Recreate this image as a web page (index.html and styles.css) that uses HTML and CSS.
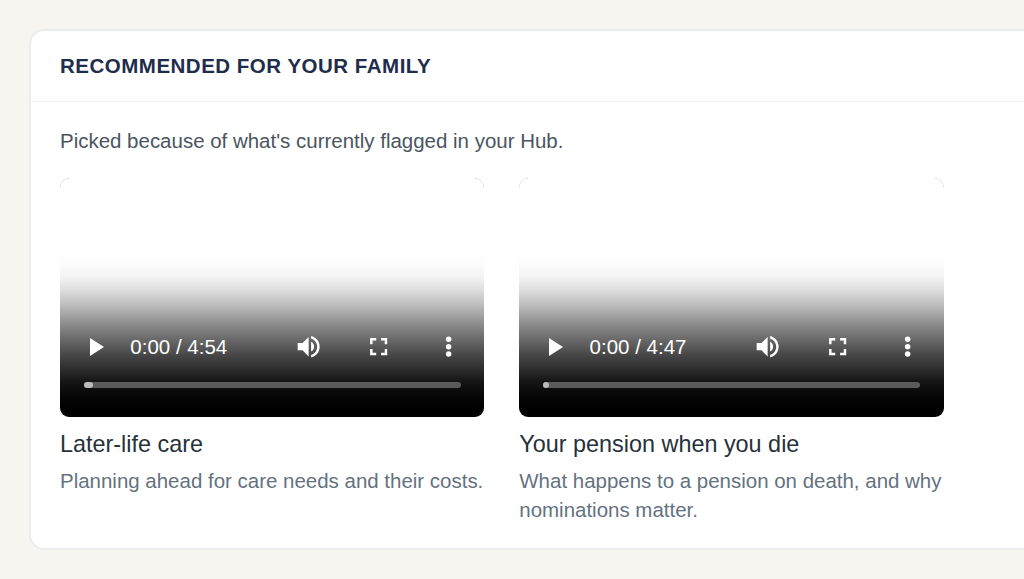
FILE: index.html
```html
<!DOCTYPE html>
<html lang="en">
<head>
    <meta charset="UTF-8">
    <meta name="viewport" content="width=device-width, initial-scale=1.0">
    <title>Recommended for your family</title>
    <link rel="stylesheet" href="styles.css">
</head>
<body>

    <section class="card">
        <div class="card-header">
            <h2>Recommended for your family</h2>
        </div>
        <div class="card-body">
            <p class="intro">Picked because of what's currently flagged in your Hub.</p>

            <div class="video-grid">
                <article class="video-item">
                    <div class="player">
                        <div class="controls">
                            <svg class="play" viewBox="0 0 14 18"><path d="M0 0v18l14-9z"/></svg>
                            <span class="time">0:00 / 4:54</span>
                            <svg class="icon" viewBox="0 0 24 24"><path d="M3 9v6h4l5 5V4L7 9H3zm13.500 3c0-1.770-1.020-3.290-2.500-4.030v8.050c1.480-.73 2.500-2.250 2.500-4.020zM14 3.230v2.060c2.890.86 5 3.540 5 6.710s-2.110 5.850-5 6.710v2.060c4.010-.91 7-4.490 7-8.770s-2.990-7.860-7-8.770z"/></svg>
                            <svg class="icon" viewBox="0 0 24 24"><path d="M7 14H5v5h5v-2H7v-3zm-2-4h2V7h3V5H5v5zm12 7h-3v2h5v-5h-2v3zM14 5v2h3v3h2V5h-5z"/></svg>
                            <svg class="icon" viewBox="0 0 24 24"><circle cx="12" cy="6" r="2.250"/><circle cx="12" cy="12" r="2.250"/><circle cx="12" cy="18" r="2.250"/></svg>
                        </div>
                        <div class="timeline"><div class="buffered" style="width: 9px"></div></div>
                    </div>
                    <h3>Later-life care</h3>
                    <p class="desc">Planning ahead for care needs and their costs.</p>
                </article>

                <article class="video-item">
                    <div class="player">
                        <div class="controls">
                            <svg class="play" viewBox="0 0 14 18"><path d="M0 0v18l14-9z"/></svg>
                            <span class="time">0:00 / 4:47</span>
                            <svg class="icon" viewBox="0 0 24 24"><path d="M3 9v6h4l5 5V4L7 9H3zm13.500 3c0-1.770-1.020-3.290-2.500-4.030v8.050c1.480-.73 2.500-2.250 2.500-4.020zM14 3.230v2.060c2.890.86 5 3.540 5 6.710s-2.110 5.850-5 6.710v2.060c4.010-.91 7-4.490 7-8.770s-2.990-7.860-7-8.770z"/></svg>
                            <svg class="icon" viewBox="0 0 24 24"><path d="M7 14H5v5h5v-2H7v-3zm-2-4h2V7h3V5H5v5zm12 7h-3v2h5v-5h-2v3zM14 5v2h3v3h2V5h-5z"/></svg>
                            <svg class="icon" viewBox="0 0 24 24"><circle cx="12" cy="6" r="2.250"/><circle cx="12" cy="12" r="2.250"/><circle cx="12" cy="18" r="2.250"/></svg>
                        </div>
                        <div class="timeline"><div class="buffered" style="width: 6px"></div></div>
                    </div>
                    <h3>Your pension when you die</h3>
                    <p class="desc">What happens to a pension on death, and why nominations matter.</p>
                </article>
            </div>
        </div>
    </section>

</body>
</html>
```
FILE: styles.css
```css
* {
    box-sizing: border-box;
}
body {
    margin: 0;
    padding: 29px 0 0 29px;
    background-color: #f7f5f0;
    font-family: "Liberation Sans", Arial, sans-serif;
}
h2, h3, p {
    margin: 0;
}
.card {
    height: 521px;
    border: 2px solid #ebedec;
    border-right: 0;
    border-radius: 15px 0 0 15px;
    background-color: white;
}
.card-header {
    height: 71px;
    padding: 20px 29px 0;
    border-bottom: 1px solid #eff1f2;
}
.card-header h2 {
    font-size: 20.500px;
    line-height: 29px;
    letter-spacing: 0.500px;
    text-transform: uppercase;
    color: #1e2d4c;
}
.card-body {
    padding: 24px 29px;
}
.intro {
    font-size: 20.480px;
    line-height: 29px;
    color: #4a5560;
}
.video-grid {
    display: grid;
    grid-template-columns: 424.300px 424.300px;
    gap: 35px;
    margin-top: 23px;
}
.player {
    display: flex;
    flex-direction: column;
    justify-content: flex-end;
    height: 238.500px;
    padding: 0 23.500px 29px;
    border-radius: 9px;
    background: linear-gradient(to bottom, #fff 75px, #fcfcfc 86px, #f4f4f4 98px, #dedede 112px, #b8b8b8 129px, #8f8f8f 145px, #686868 162px, #434343 179px, #262626 195px, #161616 203px, #0b0b0b 213px, #020202 225px, #000 235px) no-repeat;
    position: relative;
}
/* faint corner lines of the empty poster */
.player::before {
    content: "";
    position: absolute;
    inset: 0 0 auto 0;
    height: 9px;
    background:
        radial-gradient(circle at 9px 9px, #fff0 8px, #dcdcdc 8.500px, #fff0 9.200px) left top / 9px 9px no-repeat,
        radial-gradient(circle at 0 9px, #fff0 8px, #dcdcdc 8.500px, #fff0 9.200px) right top / 9px 9px no-repeat;
}
.controls {
    display: flex;
    align-items: center;
    height: 70px;
    color: white;
}
.controls svg {
    fill: white;
    flex: none;
}
.play {
    width: 14px;
    height: 18px;
    margin-left: 6px;
}
.time {
    flex: 1;
    margin-left: 26.800px;
    font-size: 20.500px;
}
.icon {
    width: 29.300px;
    height: 29.300px;
    margin-left: 41px;
}
.icon:last-child {
    margin-right: -2.700px;
}
.timeline {
    height: 6px;
    border-radius: 3px;
    background-color: #5b5b5b;
}
.buffered {
    height: 6px;
    border-radius: 3px;
    background-color: #bbb;
}
.video-item h3 {
    margin-top: 10.500px;
    font-size: 23.400px;
    font-weight: normal;
    line-height: 34px;
    color: #27313a;
}
.desc {
    margin-top: 4.900px;
    font-size: 20.480px;
    line-height: 29.300px;
    color: #64727f;
}
```
